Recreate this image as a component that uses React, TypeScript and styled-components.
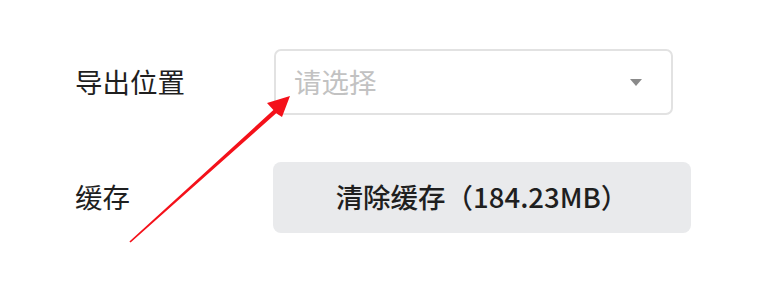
import React, { FC } from 'react'
import styled, { createGlobalStyle } from 'styled-components'

const GlobalStyle = createGlobalStyle`
  html, body {
    margin: 0;
    padding: 0;
    background: #ffffff;
    font-family: "Noto Sans CJK SC", "Noto Sans", sans-serif;
  }
`

const App: FC = () => {
  return (
    <>
      <GlobalStyle />
      <Page>
        <Form>
          <Row>
            <Label>导出位置</Label>
            <Select>
              <Placeholder>请选择</Placeholder>
              <Caret />
            </Select>
          </Row>
          <Row>
            <Label>缓存</Label>
            <ClearButton>清除缓存（184.23MB）</ClearButton>
          </Row>
        </Form>
        <Arrow width="758" height="302" viewBox="0 0 758 302">
          <polygon
            points="130.6,242.5 276.2,113.2 282,117 290,96 267,103 273.4,110 129.4,241.5"
            fill="#f4111a"
          />
        </Arrow>
      </Page>
    </>
  )
}

export default App

const Page = styled.div`
  position: relative;
  width: 758px;
  height: 302px;
  overflow: hidden;
`

const Form = styled.div`
  display: flex;
  flex-direction: column;
  gap: 47px;
  padding: 49px 0 0 75px;
`

const Row = styled.div`
  display: flex;
  flex-direction: row;
  align-items: center;
`

const Label = styled.div`
  width: 199px;
  font-size: 27.5px;
  color: #1f1f1f;
  margin-top: -3px;
`

const Select = styled.div`
  box-sizing: border-box;
  width: 399px;
  height: 66px;
  border: 2px solid #e2e2e2;
  border-radius: 7px;
  display: flex;
  flex-direction: row;
  align-items: center;
  justify-content: space-between;
  padding: 0 29px 0 18px;
`

const Placeholder = styled.span`
  font-size: 27.5px;
  color: #c2c2c2;
  margin-top: -2px;
`

const Caret = styled.span`
  width: 0;
  height: 0;
  border-left: 6px solid transparent;
  border-right: 6px solid transparent;
  border-top: 7px solid #8a8a8a;
`

const ClearButton = styled.button`
  box-sizing: border-box;
  width: 418px;
  height: 71px;
  border: none;
  border-radius: 8px;
  background: #e9eaec;
  font-family: "Noto Sans CJK SC", "Noto Sans", sans-serif;
  font-size: 27.5px;
  font-weight: 500;
  color: #1f1f1f;
  padding: 0 0 4px;
  margin-left: -1px;
`

const Arrow = styled.svg`
  position: absolute;
  left: 0;
  top: 0;
  pointer-events: none;
`
